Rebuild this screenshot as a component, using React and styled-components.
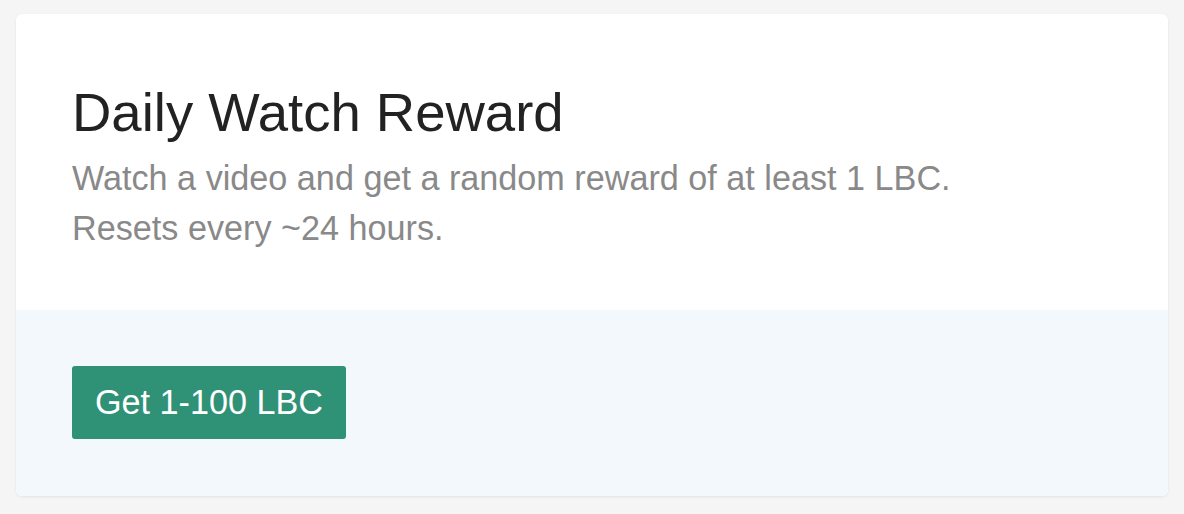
import React from "react";
import styled, { createGlobalStyle } from "styled-components";

const GlobalStyle = createGlobalStyle`
  html, body {
    margin: 0;
    padding: 0;
    background: #f5f5f5;
  }
  body {
    font-family: "Liberation Sans", Arial, Helvetica, sans-serif;
  }
`;

const Page = styled.div`
  width: 1184px;
  height: 514px;
  padding: 14px 16px 18px;
  box-sizing: border-box;
`;

const Card = styled.section`
  background: #ffffff;
  border-radius: 6px;
  overflow: hidden;
  box-shadow: 0 1px 3px rgba(0, 0, 0, 0.08);
  display: flex;
  flex-direction: column;
  height: 482px;
`;

const Header = styled.div`
  padding: 67px 56px 57px;
`;

const Title = styled.h1`
  margin: 0;
  font-size: 54.5px;
  line-height: 64px;
  font-weight: 400;
  color: #222222;
`;

const Subtitle = styled.p`
  margin: 8px 0 0;
  font-size: 34.2px;
  line-height: 50px;
  color: #898989;
`;

const Footer = styled.div`
  flex: 1;
  background: #f3f8fd;
  padding: 56px;
  display: flex;
  align-items: flex-start;
`;

const Button = styled.button`
  font-family: inherit;
  font-size: 34.2px;
  line-height: 73px;
  height: 73px;
  padding: 0 23px;
  color: #ffffff;
  background: #2f9176;
  border: none;
  border-radius: 3px;
  cursor: pointer;
`;

export default function App() {
  return (
    <>
      <GlobalStyle />
      <Page>
        <Card>
          <Header>
            <Title>Daily Watch Reward</Title>
            <Subtitle>
              Watch a video and get a random reward of at least 1 LBC.
              <br />
              Resets every ~24 hours.
            </Subtitle>
          </Header>
          <Footer>
            <Button>Get 1-100 LBC</Button>
          </Footer>
        </Card>
      </Page>
    </>
  );
}
